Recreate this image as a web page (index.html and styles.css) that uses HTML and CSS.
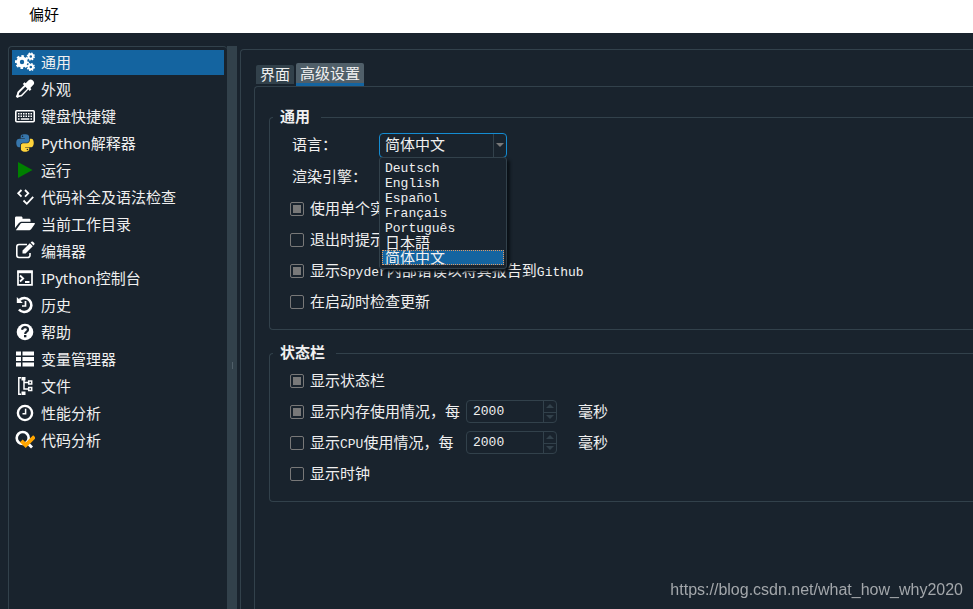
FILE: index.html
```html
<!DOCTYPE html>
<html lang="zh-CN">
<head>
<meta charset="utf-8">
<title>偏好</title>
<link rel="stylesheet" href="styles.css">
</head>
<body>
<header class="titlebar">偏好</header>
<main class="dialog">
  <nav class="sidebar" aria-label="偏好">
    <ul class="pages">
      <li><a class="page current" href="#general"><svg class="icon" viewBox="0 0 20 20"><circle cx="7" cy="10" r="3.900" fill="none" stroke="currentColor" stroke-width="3.400"/><circle cx="7" cy="10" r="6" fill="none" stroke="currentColor" stroke-width="2" stroke-dasharray="2.600 2.112" stroke-dashoffset="1.300"/><g fill="none" stroke="currentColor"><circle cx="15.800" cy="4.500" r="2.200" stroke-width="1.900"/><circle cx="15.800" cy="4.500" r="3.400" stroke-width="1.400" stroke-dasharray="1.500 1.170"/><circle cx="15.800" cy="15" r="2.200" stroke-width="1.900"/><circle cx="15.800" cy="15" r="3.400" stroke-width="1.400" stroke-dasharray="1.500 1.170"/></g></svg>通用</a></li>
      <li><a class="page" href="#appearance"><svg class="icon" viewBox="0 0 20 20"><path d="M17.900 1.600a3.200 3.200 0 0 0-4.600 0l-2.600 2.600-1.200-1-1.700 1.700 1.300 1.300-6.300 6.300c-.7.7-.6 2-1 3L.8 17.500l1.400 1.400 2-1c1-.4 2.300-.3 3-1l6.200-6.300 1.300 1.300 1.700-1.700-1-1.200 2.500-2.700a3.200 3.200 0 0 0 0-4.700zM10.300 7.700l2 2-6 6c-.6.6-1.700.4-2.600.7.300-.9.100-2 .700-2.600z" fill="currentColor" fill-rule="evenodd"/></svg>外观</a></li>
      <li><a class="page" href="#shortcuts"><svg class="icon" viewBox="0 0 20 20"><rect x=".8" y="4.800" width="18.400" height="11" rx="1" fill="none" stroke="currentColor" stroke-width="1.600"/><path d="M3 7.700h14M3 10.200h14" stroke="currentColor" stroke-width="1.500" stroke-dasharray="1.500 1"/><path d="M3 13h1.500M5.800 13h8.500M15.500 13H17" stroke="currentColor" stroke-width="1.500"/></svg>键盘快捷键</a></li>
      <li><a class="page" href="#interpreter"><svg class="icon" viewBox="-32 0 512 512"><path fill="#ffd43b" d="M439.800 200.500c-7.700-30.900-22.300-54.200-53.400-54.200h-40.100v47.400c0 36.800-31.200 67.800-66.800 67.800H172.700c-29.200 0-53.400 25-53.400 54.300v101.800c0 29 25.200 46 53.400 54.300 33.800 9.900 66.300 11.700 106.800 0 26.900-7.800 53.400-23.500 53.400-54.300v-40.700H226.200v-13.600h160.200c31.100 0 42.600-21.700 53.400-54.200 11.200-33.500 10.700-65.700 0-108.600zM286.200 404c11.100 0 20.100 9.100 20.100 20.300 0 11.300-9 20.400-20.100 20.400-11 0-20.100-9.200-20.100-20.400.1-11.300 9.100-20.300 20.100-20.300z"/><path fill="#3776ab" d="M167.800 248.100h106.800c29.700 0 53.400-24.500 53.400-54.300V91.900c0-29-24.400-50.700-53.400-55.600-35.800-5.900-74.700-5.600-106.800.1-45.200 8-53.400 24.700-53.400 55.600v40.700h106.900v13.600h-147c-31.100 0-58.300 18.700-66.800 54.200-9.800 40.700-10.200 66.100 0 108.600 7.600 31.600 25.700 54.200 56.800 54.200H101v-48.800c0-35.300 30.500-66.400 66.800-66.400zm-6.700-142.600c-11.100 0-20.100-9.100-20.100-20.300.1-11.300 9-20.400 20.100-20.400 11 0 20.100 9.200 20.100 20.400s-9 20.300-20.100 20.300z"/></svg>Python解释器</a></li>
      <li><a class="page" href="#run"><svg class="icon" viewBox="0 0 20 20"><path d="M3 2l14.500 8L3 18z" fill="#008000"/></svg>运行</a></li>
      <li><a class="page" href="#completion"><svg class="icon" viewBox="0 0 20 20"><path d="M6.500 3L3.200 6.300l3.300 3.300M10 3l3.300 3.300L10 9.600M8.500 13.500l3.300 3.300 6.400-7" fill="none" stroke="currentColor" stroke-width="1.800"/></svg>代码补全及语法检查</a></li>
      <li><a class="page" href="#cwd"><svg class="icon" viewBox="0 0 20 20"><path d="M0 14V4c0-1 .5-1.500 1.500-1.500H6c1 0 1.500.5 1.500 1.500v.7H14c1 0 1.500.5 1.500 1.500v1.600H7c-1.500 0-2.500.5-3.500 1.700zM1 16l4-5.600C5.600 9.500 6.300 9 7.500 9h11.700c.8 0 1 .5.600 1.100l-3.500 4.800c-.7.9-1.500 1.400-2.500 1.400H1.600c-.4 0-.8 0-.6-.3z" fill="currentColor"/></svg>当前工作目录</a></li>
      <li><a class="page" href="#editor"><svg class="icon" viewBox="0 0 20 20"><path d="M12 3.500H4A2.300 2.300 0 0 0 1.800 5.800v8.400A2.300 2.300 0 0 0 4 16.500h8.700a2.300 2.300 0 0 0 2.300-2.300V12" fill="none" stroke="currentColor" stroke-width="1.600"/><path d="M7.500 9.500l7.300-7.300 3 3-7.300 7.300h-3zM15.600 1.500l.9-.8c.4-.4 1-.4 1.400 0l1.400 1.400c.4.4.4 1 0 1.400l-.8.900z" fill="currentColor"/></svg>编辑器</a></li>
      <li><a class="page" href="#console"><svg class="icon" viewBox="0 0 20 20"><path d="M3 3.200h14v13.600H3z" fill="none" stroke="currentColor" stroke-width="1.700"/><path d="M2.500 3h15v2.200h-15z" fill="currentColor"/><path d="M5 7.500l3.200 3L5 13.500M10 14h4.500" fill="none" stroke="currentColor" stroke-width="1.800"/></svg>IPython控制台</a></li>
      <li><a class="page" href="#history"><svg class="icon" viewBox="0 0 20 20"><path d="M4.500 5A7 7 0 1 1 4 14.500" fill="none" stroke="currentColor" stroke-width="2.600"/><path d="M1.800 2v6h6z" fill="currentColor"/><path d="M10.500 6v5H7" fill="none" stroke="currentColor" stroke-width="1.700"/></svg>历史</a></li>
      <li><a class="page" href="#help"><svg class="icon" viewBox="0 0 20 20"><circle cx="10" cy="10" r="8.300" fill="currentColor"/><path d="M7 7.800c.3-1.700 1.300-2.600 3-2.600 1.800 0 3 1 3 2.500 0 2-2.800 2-2.800 4.300" fill="none" stroke="#19232d" stroke-width="2.200"/><path d="M9 13h2.400v2.300H9z" fill="#19232d"/></svg>帮助</a></li>
      <li><a class="page" href="#variables"><svg class="icon" viewBox="0 0 20 20"><path d="M1 2.500h5v4H1zM7.500 2.500H19v4H7.500zM1 8h5v4H1zM7.500 8H19v4H7.500zM1 13.500h5v4H1zM7.500 13.500H19v4H7.500z" fill="currentColor"/></svg>变量管理器</a></li>
      <li><a class="page" href="#files"><svg class="icon" viewBox="0 0 20 20"><path d="M6 1.800H3.800v16.400H6M9 3v10h5M9 6.500h5" fill="none" stroke="currentColor" stroke-width="1.500"/><path d="M6.500 1h4v3.500h-4zM6.500 15.500h4V19h-4z" fill="currentColor"/><path d="M13.700 5h3v3h-3zM13.700 11.500h3v3h-3z" fill="none" stroke="currentColor" stroke-width="1.500"/></svg>文件</a></li>
      <li><a class="page" href="#profiler"><svg class="icon" viewBox="0 0 20 20"><circle cx="10" cy="10" r="7.100" fill="none" stroke="currentColor" stroke-width="2.400"/><path d="M10.600 5.800v5H7.500" fill="none" stroke="currentColor" stroke-width="1.500"/></svg>性能分析</a></li>
      <li><a class="page" href="#analysis"><svg class="icon" viewBox="0 0 20 20"><circle cx="7.700" cy="8" r="6" fill="none" stroke="currentColor" stroke-width="2.600"/><path d="M12 12.500l5 5" stroke="currentColor" stroke-width="2.800"/><path d="M6.300 10.800l4.400 4.400L19.500 6.500" fill="none" stroke="#ffa500" stroke-width="3.800"/></svg>代码分析</a></li>
    </ul>
  </nav>
  <div class="splitter" role="separator"><span class="grip"></span></div>
  <section class="content">
    <div class="tabs" role="tablist">
      <button class="tab" type="button" role="tab">界面</button>
      <button class="tab selected" type="button" role="tab" aria-selected="true">高级设置</button>
    </div>
    <form class="panel">
      <fieldset class="group">
        <legend>通用</legend>
        <div class="row field">
          <label class="caption" for="language">语言：</label>
          <div class="combo">
            <select id="language"><option>简体中文</option></select>
            <svg class="arrow" viewBox="0 0 8 4"><path d="M0 0h8L4 4z" fill="currentColor"/></svg>
            <ul class="options" role="listbox" aria-label="语言">
              <li class="latin" role="option">Deutsch</li>
              <li class="latin" role="option">English</li>
              <li class="latin" role="option">Español</li>
              <li class="latin" role="option">Français</li>
              <li class="latin" role="option">Português</li>
              <li role="option" lang="ja">日本語</li>
              <li class="chosen" role="option" aria-selected="true">简体中文</li>
            </ul>
          </div>
        </div>
        <div class="row field"><span class="caption">渲染引擎：</span></div>
        <div class="row"><label class="check"><input type="checkbox" checked>使用单个实例</label></div>
        <div class="row"><label class="check"><input type="checkbox">退出时提示</label></div>
        <div class="row"><label class="check"><input type="checkbox" checked><span>显示<span class="latin">Spyder</span>内部错误以将其报告到<span class="latin">Github</span></span></label></div>
        <div class="row"><label class="check"><input type="checkbox">在启动时检查更新</label></div>
      </fieldset>
      <fieldset class="group status">
        <legend>状态栏</legend>
        <div class="row"><label class="check"><input type="checkbox" checked>显示状态栏</label></div>
        <div class="row">
          <label class="check timed"><input type="checkbox" checked>显示内存使用情况，每</label>
          <div class="spin">
            <input class="latin" type="number" value="2000" aria-label="内存使用情况间隔" disabled>
            <div class="steps">
              <button type="button" aria-label="增加" disabled><svg viewBox="0 0 8 4"><path d="M0 4h8L4 0z" fill="currentColor"/></svg></button>
              <button type="button" aria-label="减少" disabled><svg viewBox="0 0 8 4"><path d="M0 0h8L4 4z" fill="currentColor"/></svg></button>
            </div>
          </div>
          <span class="unit">毫秒</span>
        </div>
        <div class="row">
          <label class="check timed"><input type="checkbox"><span>显示<span class="latin">CPU</span>使用情况，每</span></label>
          <div class="spin">
            <input class="latin" type="number" value="2000" aria-label="CPU使用情况间隔" disabled>
            <div class="steps">
              <button type="button" aria-label="增加" disabled><svg viewBox="0 0 8 4"><path d="M0 4h8L4 0z" fill="currentColor"/></svg></button>
              <button type="button" aria-label="减少" disabled><svg viewBox="0 0 8 4"><path d="M0 0h8L4 4z" fill="currentColor"/></svg></button>
            </div>
          </div>
          <span class="unit">毫秒</span>
        </div>
        <div class="row"><label class="check"><input type="checkbox">显示时钟</label></div>
      </fieldset>
    </form>
  </section>
</main>
<span class="watermark">https://blog.csdn.net/what_how_why2020</span>
</body>
</html>
```
FILE: styles.css
```css
:root {
  --bg: #19232d;
  --line: #32414b;
  --text: #f0f0f0;
  --accent: #1464a0;
}

* { box-sizing: border-box; }

body {
  margin: 0;
  height: 100vh;
  display: flex;
  flex-direction: column;
  overflow: hidden;
  background: var(--bg);
  color: var(--text);
  font: 15px/20px "Noto Sans", "Noto Sans CJK SC", sans-serif;
}

ul { list-style: none; margin: 0; padding: 0; }

button, input, select { font: inherit; color: inherit; }

.titlebar {
  height: 33px;
  padding: 4px 29px;
  background: #fff;
  color: #000;
}

.dialog {
  flex: 1;
  min-height: 0;
  display: flex;
  padding: 13px 0 0 8px;
}

.sidebar {
  width: 219px;
  padding: 3px;
  border: 1px solid var(--line);
  border-width: 1px 0 0 1px;
  border-radius: 4px 4px 0 0;
}

.pages { display: grid; gap: 2px; }

.page {
  display: flex;
  align-items: center;
  gap: 6px;
  height: 25px;
  padding: 0 0 2px 3px;
  color: inherit;
  text-decoration: none;
}

.current { background: var(--accent); }

.icon { width: 20px; height: 20px; color: #fff; }

.splitter {
  width: 10px;
  display: flex;
  align-items: center;
  justify-content: center;
  background: var(--line);
}

.grip { width: 1px; height: 7px; margin-top: 76px; background: #505f69; }

.content {
  flex: 1;
  min-width: 0;
  display: flex;
  flex-direction: column;
  margin: 3px 0 0 3px;
  padding: 13px 0 0 13px;
  border: 1px solid var(--line);
  border-width: 1px 0 0 1px;
  border-radius: 4px 0 0 0;
  font-family: "Noto Sans CJK SC", sans-serif;
}

.tabs { display: flex; align-items: flex-start; gap: 2px; padding-left: 2px; }

.tab {
  height: 19px;
  margin-top: 2px;
  padding: 0 4px 2px;
  border: 0;
  border-radius: 2px 2px 0 0;
  background: var(--line);
  line-height: 17px;
}

.tab.selected {
  height: 23px;
  margin-top: 0;
  border-bottom: 3px solid var(--accent);
  background: #505f69;
}

.panel {
  flex: 1;
  padding: 19px 0 0 14px;
  border: 1px solid var(--line);
  border-width: 1px 0 0 1px;
  border-radius: 4px 0 0 0;
}

.group {
  min-width: 0;
  margin: 0;
  padding: 1px 0 12px 20px;
  border: 1px solid var(--line);
  border-right: 0;
  border-radius: 4px 0 0 4px;
}

.group legend {
  margin-left: -17px;
  padding: 0 11px 2px 7px;
  font-weight: bold;
}

.status { margin-top: 12px; }

.row { display: flex; align-items: center; height: 31px; padding-bottom: 2px; }

.field { height: 32px; }

.caption { width: 89px; padding-left: 2px; white-space: nowrap; }

.latin { font-family: "Liberation Mono", monospace; font-size: 13px; line-height: 13px; }

.combo { position: relative; width: 128px; margin-top: 2px; }

.combo select {
  display: block;
  width: 100%;
  height: 25px;
  padding: 0 5px 2px;
  appearance: none;
  border: 1px solid #148cd2;
  border-radius: 4px;
  background: linear-gradient(var(--line), var(--line)) right 12px top / 1px 100% no-repeat var(--bg);
}

.arrow { position: absolute; top: 10px; right: 3px; width: 8px; height: 4px; color: #787878; }

.options {
  position: absolute;
  z-index: 1;
  top: 24px;
  left: 0;
  width: 100%;
  padding: 2px 2px 3px;
  border: 1px solid var(--line);
  border-radius: 3px;
  background: var(--bg);
  box-shadow: 3px 3px 3px #0b1117;
}

.options li { height: 15px; padding-left: 3px; line-height: 13px; }

.options .latin { line-height: 17px; }

.options .chosen { background: var(--accent); outline: 1px dotted #e09a64; outline-offset: -1px; }

.check { display: flex; align-items: center; gap: 6px; white-space: nowrap; }

.check input {
  width: 14px;
  height: 14px;
  margin: 2px 0 0;
  appearance: none;
  border: 1px solid #787878;
  border-radius: 2px;
}

.check input:checked { padding: 2px; background: #787878 content-box; }

.timed { width: 176px; }

.spin {
  display: flex;
  width: 91px;
  height: 23px;
  margin-top: 2px;
  border: 1px solid var(--line);
  border-radius: 4px;
}

.spin input {
  flex: 1;
  min-width: 0;
  padding: 0 6px;
  border: 0;
  background: none;
  appearance: textfield;
}

.steps { display: grid; grid-template-rows: 1fr 1fr; width: 13px; border-left: 1px solid var(--line); }

.steps button {
  display: grid;
  place-items: center;
  min-height: 0;
  padding: 0;
  border: 0;
  background: none;
  color: var(--line);
}

.steps button + button { border-top: 1px solid var(--line); }

.steps svg { width: 8px; height: 4px; }

.unit { margin-left: 21px; }

.watermark {
  position: fixed;
  right: 10px;
  bottom: 9px;
  color: #a3a7ab;
  font: 16px/20px "Liberation Sans", sans-serif;
}
```
